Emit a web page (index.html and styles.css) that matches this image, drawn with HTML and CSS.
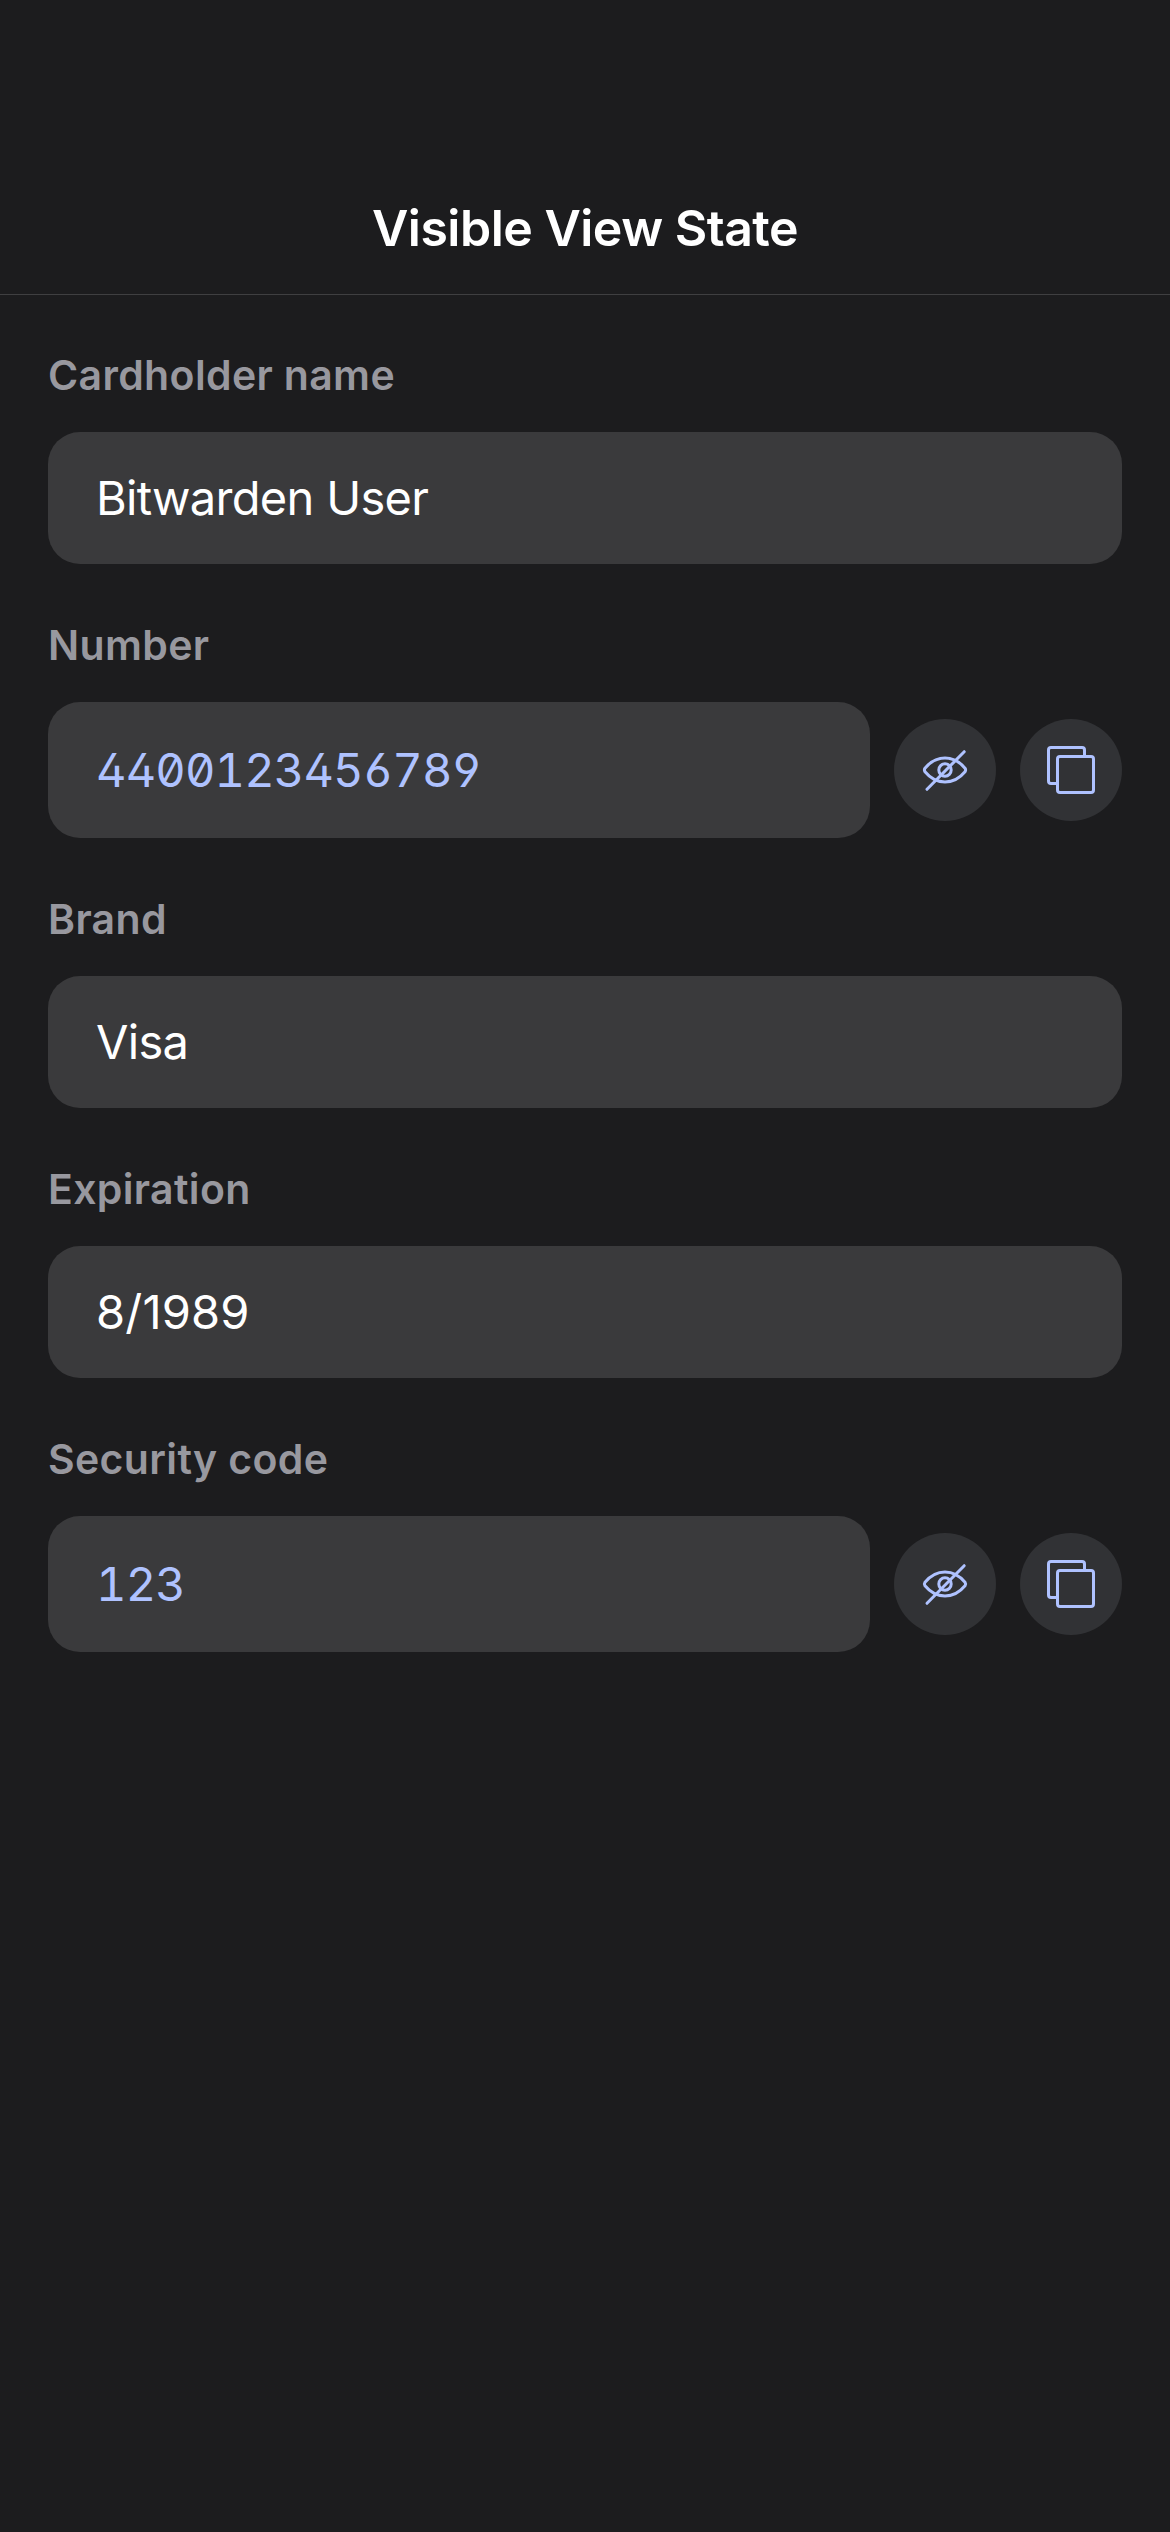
FILE: index.html
```html
<!DOCTYPE html>
<html lang="en">
<head>
<meta charset="utf-8">
<title>Visible View State</title>
<link rel="stylesheet" href="styles.css">
</head>
<body>
<svg width="0" height="0" class="sprite" aria-hidden="true">
  <symbol id="eye-slash" viewBox="0 0 102 102">
    <path d="M31 52.8Q29.8 51 31 49.200C36.500 42.500 43 38.900 51 38.900S65.500 42.500 71 49.200Q72.200 51 71 52.800C65.500 59.500 59 63 51 63S36.500 59.500 31 52.800Z"/>
    <circle cx="51" cy="51" r="6.200"/>
    <path d="M33 70.300L70.200 32.700"/>
  </symbol>
  <symbol id="copy" viewBox="0 0 102 102">
    <rect x="37.500" y="37.500" width="36" height="36" rx="2.500"/>
    <path d="M37.500 64.500H31Q28.500 64.500 28.500 62V31Q28.500 28.500 31 28.500H62Q64.500 28.500 64.500 31V37.500"/>
  </symbol>
</svg>
<header class="nav"><h1 class="title">Visible View State</h1></header>
<main class="fields">
  <section class="field">
    <h2 class="label">Cardholder name</h2>
    <div class="row"><div class="value">Bitwarden User</div></div>
  </section>
  <section class="field">
    <h2 class="label">Number</h2>
    <div class="row">
      <div class="value code">4400123456789</div>
      <button class="action" aria-label="Hide number"><svg><use href="#eye-slash"/></svg></button>
      <button class="action" aria-label="Copy number"><svg><use href="#copy"/></svg></button>
    </div>
  </section>
  <section class="field">
    <h2 class="label">Brand</h2>
    <div class="row"><div class="value">Visa</div></div>
  </section>
  <section class="field">
    <h2 class="label">Expiration</h2>
    <div class="row"><div class="value date">8/1989</div></div>
  </section>
  <section class="field">
    <h2 class="label">Security code</h2>
    <div class="row">
      <div class="value code">123</div>
      <button class="action" aria-label="Hide security code"><svg><use href="#eye-slash"/></svg></button>
      <button class="action" aria-label="Copy security code"><svg><use href="#copy"/></svg></button>
    </div>
  </section>
</main>
</body>
</html>
```
FILE: styles.css
```css
* { box-sizing: border-box; }
body {
  margin: 0;
  min-height: 2532px;
  background: #1c1c1e;
  color: #fff;
  font-family: Inter, "Liberation Sans", sans-serif;
}
.sprite { display: block; }
.nav {
  height: 295px;
  padding-top: 198px;
  border-bottom: 1px solid #3f3f41;
}
.title {
  margin: 0;
  font-size: 50px;
  line-height: 60px;
  font-weight: 600;
  letter-spacing: -0.5px;
  text-align: center;
}
.fields {
  display: flex;
  flex-direction: column;
  gap: 54px;
  padding: 53px 48px 0;
}
.field {
  display: flex;
  flex-direction: column;
  gap: 30px;
}
.label {
  margin: 0;
  height: 54px;
  font-size: 41px;
  line-height: 54px;
  font-weight: 600;
  letter-spacing: 0.35px;
  color: #98989f;
}
.row {
  display: flex;
  align-items: center;
  gap: 24px;
}
.value {
  flex: 1;
  height: 132px;
  padding: 0 48px;
  border-radius: 32px;
  background: #3a3a3c;
  font-size: 47px;
  line-height: 132px;
  letter-spacing: -0.7px;
  white-space: nowrap;
}
.date { letter-spacing: 0.2px; }
.code {
  height: 136px;
  line-height: 136px;
  color: #afc2ff;
  letter-spacing: -0.85px;
  font-feature-settings: "tnum", "zero", "cv02", "cv03", "cv04";
}
.action {
  display: block;
  width: 102px;
  height: 102px;
  padding: 0;
  border: 0;
  border-radius: 50%;
  background: #313235;
}
.action svg {
  display: block;
  width: 102px;
  height: 102px;
  fill: none;
  stroke: #afc2ff;
  stroke-width: 3;
  stroke-linecap: round;
  stroke-linejoin: round;
}
```
